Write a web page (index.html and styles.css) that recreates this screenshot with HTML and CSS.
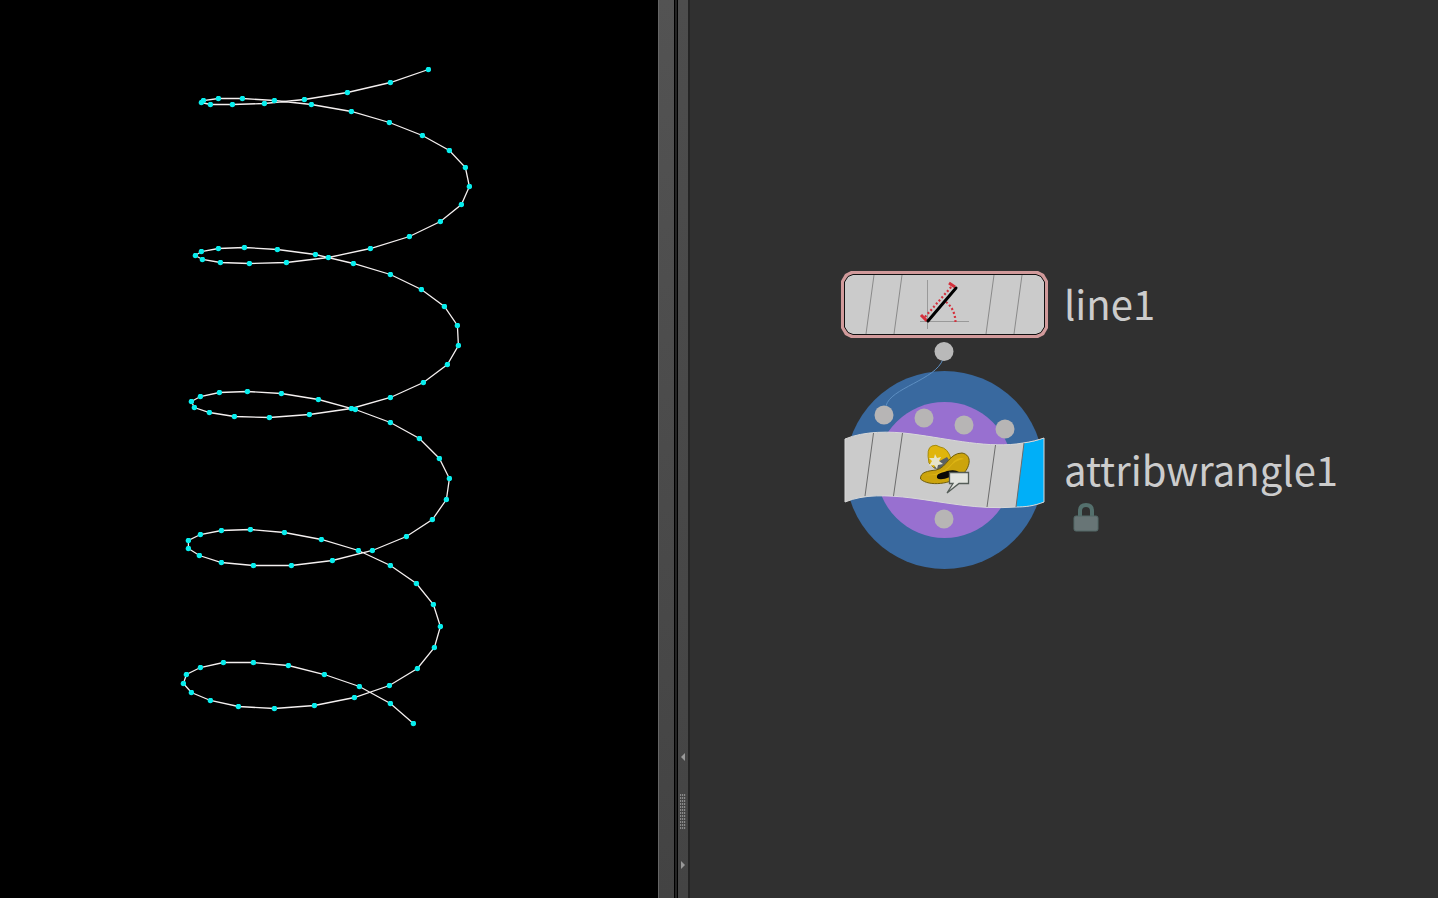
FILE: index.html
```html
<!DOCTYPE html>
<html lang="en">
<head>
<meta charset="utf-8">
<meta name="viewport" content="width=device-width, initial-scale=1">
<title>Geometry and network</title>
<link rel="stylesheet" href="styles.css">
</head>
<body>
<main class="workspace">
  <section class="viewport" aria-label="Scene view">
    <svg class="curve" width="640" height="780" viewBox="0 0 640 780" role="img" aria-label="Spiral curve with points">
      <defs>
        <marker id="point" markerUnits="userSpaceOnUse" markerWidth="6" markerHeight="6" refX="3" refY="3">
          <circle class="point" cx="3" cy="3" r="2.7"/>
        </marker>
      </defs>
      <polyline class="curve-line" marker-start="url(#point)" marker-mid="url(#point)" marker-end="url(#point)" transform="translate(.4 .5)" points="428,69 390,82 347,92 304,99 264,103 232,104 210,104 201,102 203,100 218,98 242,98 274,100 311,104 351,111 389,122 422,135 449,150 465,167 469,186 461,204 440,221 409,236 370,248 328,257 286,262 249,263 220,262 202,259 195,255 201,251 218,248 244,247 277,249 315,254 353,263 390,274 421,289 444,306 457,325 458,345 447,364 423,382 390,397 351,408 309,414 269,417 234,416 209,412 194,407 191,401 200,396 219,392 247,391 281,393 318,399 355,409 390,422 419,438 439,458 449,478 446,499 432,519 406,536 372,550 332,560 291,565 253,565 221,562 199,555 188,548 188,540 200,534 221,530 250,529 284,532 321,539 358,550 390,565 416,583 433,604 440,626 434,647 417,668 389,685 354,697 314,705 274,708 238,706 210,700 191,692 183,683 186,674 200,667 223,662 253,662 288,665 324,674 359,686 390,703 413,723"/>
    </svg>
  </section>

  <div class="pane-edge"></div>
  <div class="pane-gap"></div>
  <div class="splitter">
    <button class="splitter-button" type="button" aria-label="Collapse left"><svg width="4" height="8" viewBox="0 0 4 8"><path d="M4 0V8L0 4Z"/></svg></button>
    <div class="grip"></div>
    <button class="splitter-button" type="button" aria-label="Collapse right"><svg width="4" height="8" viewBox="0 0 4 8"><path d="M0 0V8L4 4Z"/></svg></button>
  </div>

  <section class="network" aria-label="Network editor">
    <div class="node node-line">
      <svg class="node-shape" width="207" height="67" viewBox="841 271 207 67" aria-hidden="true">
        <path fill="#d19a9b" d="M851 271H1038L1044 274L1048 281V328L1044 335L1038 338H851L845 335L841 328V281L845 274Z"/>
        <path fill="#cbcbcb" stroke="#111" d="M853 274.500H1036L1041 276.500L1044.500 282V327L1041 332.500L1036 334.500H853L848 332.500L844.500 327V282L848 276.500Z"/>
        <path stroke="#8a8a8a" fill="none" d="M874 275L866 334M902 275L894 334M994 275L986 334M1022 275L1014 334"/>
        <path stroke="#999" fill="none" d="M927.500 280V329M920 321.500H969"/>
        <path stroke="#d4303c" stroke-width="2.200" stroke-dasharray="2 2.200" fill="none" d="M925 317L952 286M946 302Q955 309 955.500 322"/>
        <path stroke="#d4303c" stroke-width="3" fill="none" d="M921 315L927 321M949 283L955 287"/>
        <path stroke="#000" stroke-width="3" stroke-linecap="round" d="M928 321L956 288"/>
      </svg>
      <span class="node-name">line1</span>
    </div>

    <div class="node node-wrangle">
      <svg class="node-shape" width="207" height="200" viewBox="841 371 207 200" aria-hidden="true">
        <circle fill="#39699f" cx="944.500" cy="470" r="99"/>
        <circle fill="#9870d0" cx="944.500" cy="470" r="68"/>
        <g fill="#b7b5b5"><circle cx="884" cy="415" r="9.500"/><circle cx="924" cy="418" r="9.500"/><circle cx="964" cy="425" r="9.500"/><circle cx="1005" cy="429" r="9.500"/><circle cx="944" cy="519" r="9.500"/></g>
        <path fill="#cbcbcb" d="M845 439C864 431 890 431 912 434C950 439 990 449 1023 443C1031 442 1038 440 1044 438V502C1034 506 1025 507 1016 507C978 510 944 502 912 498C887 495 864 494 845 502Z"/>
        <path fill="#00aff8" d="M1024 443Q1035 442 1044 438V502Q1032 507 1016 507Z"/>
        <path fill="none" stroke="#d9d9d9" d="M845 439C864 431 890 431 912 434C950 439 990 449 1023 443C1031 442 1038 440 1044 438V502C1034 506 1025 507 1016 507C978 510 944 502 912 498C887 495 864 494 845 502Z"/>
        <path stroke="#6c6c6c" fill="none" d="M873.500 433L865 496M902.500 433L893.500 496M995.500 445L987 507M1024 443L1016 507"/>
        <path fill="#e0b50c" stroke="#a58b0c" d="M929 463Q926 448 932 446Q936 444 940 447Q948 448 951 459L944 468H934Z"/>
        <path fill="#5d6264" d="M936 463L947 457L951 463L938 470L934 468Z"/>
        <path fill="#cca40c" stroke="#705d09" d="M920.500 479C920 472 928 471 936 470C947 468 949 453 962 453C973 455 970 468 962 475C952 484 929 487 920.500 479Z"/>
        <path fill="#ddb414" d="M925 475Q944 475 954 461Q960 456 964 459Q955 460 949 468Q939 477 925 475Z"/>
        <path fill="#090806" d="M937 478C936 473 942 473 947 471Q955 469 959 472L950 477Q940 481 937 478Z"/>
        <path fill="#e6e4c8" d="M935 454L937 458L941 457L939 461L943 464L938 465L937 469L934 465L929 466L932 461L929 458L934 458Z"/>
        <path fill="#e2e4df" stroke="#555d58" stroke-width="1.300" d="M949.500 472.500H968.500V483.500H959L947 493L953 483.500H949.500Z"/>
      </svg>
      <span class="node-name">attribwrangle1</span>
      <button class="lock" type="button" aria-label="Locked node">
        <svg width="26" height="30" viewBox="0 0 26 30"><path fill="none" stroke="#54706d" stroke-width="4" d="M7 15V9Q7 3 13 3T19 9V15"/><rect fill="#687576" stroke="#526967" x="1" y="14" width="24" height="15" rx="2"/></svg>
      </button>
    </div>

    <svg class="wire" width="74" height="78" viewBox="880 341 74 78" aria-hidden="true">
      <path fill="none" stroke="#5d8fc2" d="M943 359C936 380 890 388 886 406"/>
      <circle fill="#b9b9b9" cx="944" cy="351.500" r="9.500"/>
    </svg>
  </section>
</main>
</body>
</html>
```
FILE: styles.css
```css
* {
  box-sizing: border-box;
}

body {
  margin: 0;
  background: #303030;
  color: #cccccc;
  font-family: "Noto Sans CJK SC", "Noto Sans", sans-serif;
}

button {
  display: block;
  padding: 0;
  border: 0;
  background: none;
}

svg {
  display: block;
}

.workspace {
  display: grid;
  grid-template-columns: 658fr 16px 4px 12px 748fr;
  min-height: 100vh;
}

.viewport {
  min-width: 0;
  overflow: hidden;
  background: #000000;
}

.curve-line {
  fill: none;
  stroke: #f4f0f0;
  stroke-width: 1.3px;
}

.point {
  fill: #08eeee;
}

.pane-edge {
  border-left: 1px solid #666666;
  background: linear-gradient(#535353, #434343);
}

.pane-gap {
  border: solid #000000;
  border-width: 0 1px;
  background: #242424;
}

.splitter {
  display: flex;
  flex-direction: column;
  align-items: center;
  justify-content: flex-end;
  gap: 32px;
  padding-bottom: 29px;
  border-right: 2px solid #242424;
  background: linear-gradient(#4d4d4d, #444444);
}

.splitter-button {
  fill: #999999;
}

.grip {
  width: 6px;
  height: 36px;
  background: repeating-linear-gradient(#444444 0 1px, transparent 1px 3px),
    repeating-linear-gradient(90deg, #888888 0 1px, #505050 1px 2px);
}

.network {
  position: relative;
  min-width: 0;
  overflow: hidden;
}

.node {
  position: absolute;
  left: 151px;
  display: flex;
  align-items: center;
  gap: 16px;
}

.node-line {
  top: 271px;
}

.node-wrangle {
  top: 371px;
}

.node-name {
  padding-bottom: 4px;
  font-size: 40px;
  line-height: 60px;
  white-space: nowrap;
}

.lock {
  position: absolute;
  top: 131px;
  left: 232px;
}

.wire {
  position: absolute;
  top: 341px;
  left: 190px;
}
```
